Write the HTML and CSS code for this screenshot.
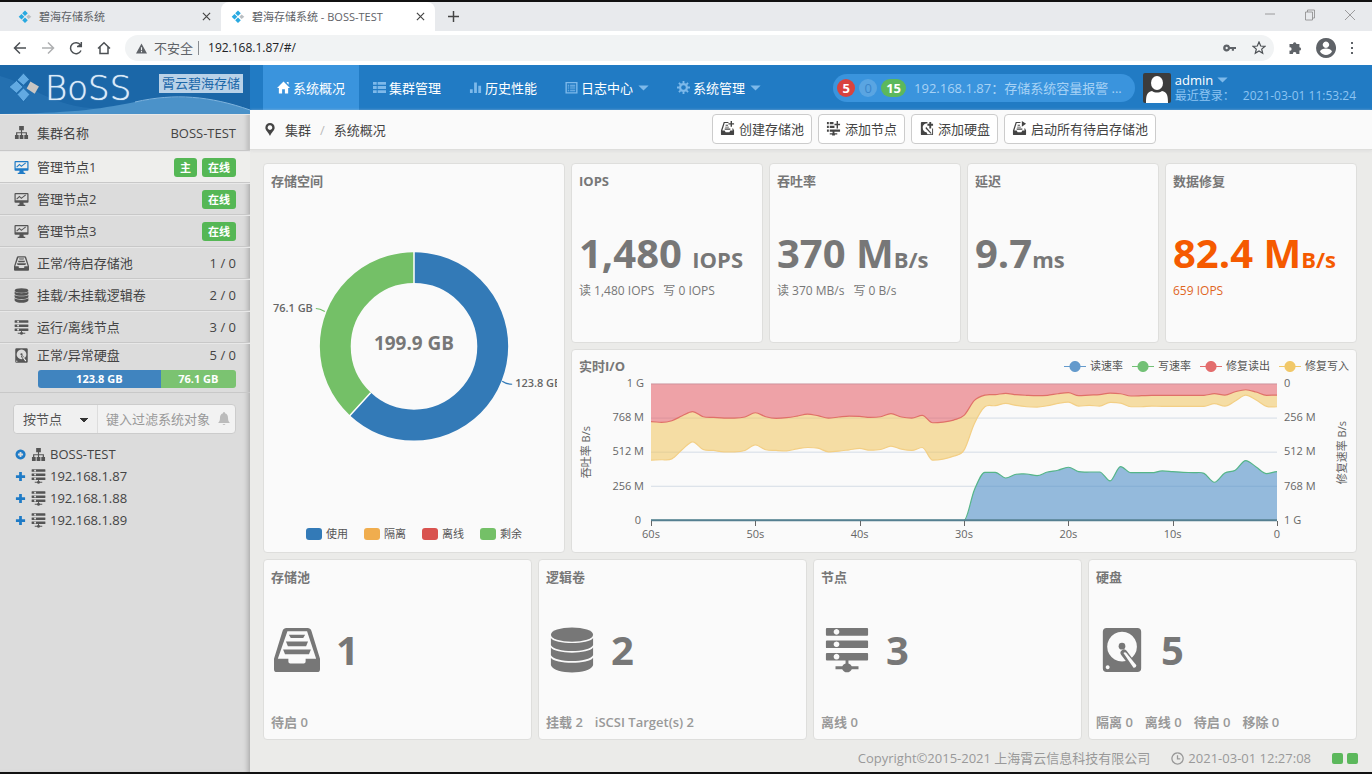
FILE: index.html
```html
<!DOCTYPE html>
<html lang="zh-CN">
<head>
<meta charset="utf-8">
<title>碧海存储系统 - BOSS-TEST</title>
<link rel="stylesheet" href="styles.css">
</head>
<body>
<svg class="sprite" aria-hidden="true">
  <symbol id="i-fav" viewBox="0 0 14 14"><path fill="#29a9e0" d="M7 .5 9.800 3.300 7 6.100 4.200 3.300zM3.500 4 6.300 6.800 3.500 9.600.7 6.800zM7 7.500 9.800 10.300 7 13.100 4.200 10.300z"/><path fill="#b9bec2" d="m10.600 4.500 2.700 2.300-2.700 2.300-2.300-2.300z"/></symbol>
  <symbol id="i-tray" viewBox="0 0 48 48"><path fill-rule="evenodd" d="M13 1h22q3 0 4 3l9 29v11q0 3-3 3H3q-3 0-3-3V33L9 4q1-3 4-3zm1 3.500L4 33h11v3q0 2 2 2h14q2 0 2-2v-3h11L34.500 4.500z"/><path d="M15.500 8h17l-2 3.500h-13zM12.500 15h23l-2 5h-19zM9.500 23.500h29l-2 5h-25z"/></symbol>
  <symbol id="i-db" viewBox="0 0 48 48"><ellipse cx="24" cy="8" rx="22" ry="7.500"/><path d="M2 11.500c4 7 40 7 44 0V19c-4 8-40 8-44 0zM2 21.500c4 7 40 7 44 0v8c-4 8-40 8-44 0zM2 32c4 7 40 7 44 0v8c-4 10-40 10-44 0z"/></symbol>
  <symbol id="i-server" viewBox="0 0 48 48"><path fill-rule="evenodd" d="M3 1h42q1 0 1 1v6q0 1-1 1H3q-1 0-1-1V2q0-1 1-1zm10 1a3 3 0 1 0 .1 0zM3 14h42q1 0 1 1v6q0 1-1 1H3q-1 0-1-1v-6q0-1 1-1zm10 1a3 3 0 1 0 .1 0zM3 27h42q1 0 1 1v6q0 1-1 1H25.500v3h0A5.500 5.500 0 0 1 29 41h7v3h-7a5.500 5.500 0 0 1-10 0h-7v-3h7a5.500 5.500 0 0 1 3.500-3v-3H3q-1 0-1-1v-6q0-1 1-1zm10 1a3 3 0 1 0 .1 0z"/></symbol>
  <symbol id="i-disk" viewBox="0 0 48 48"><path fill-rule="evenodd" d="M8 1h32q4 0 4 4v38q0 4-4 4H8q-4 0-4-4V5q0-4 4-4zm16 4a15.500 15.500 0 1 0 .1 0zM9 40a2 2 0 1 0 .1 0z"/><circle cx="24" cy="20" r="3.500"/><path d="m26 27 10.500 14" fill="none" stroke="currentColor" stroke-width="7" stroke-linecap="round"/><path d="M25.500 27q1.500-1.500 3 0L39 40q0 3-3 2.500z" fill="#fafafa"/></symbol>
  <symbol id="i-map" viewBox="0 0 16 16"><path d="M5.500 1h5v4.500H8.600V7.600h5.200v3H15V15h-4v-4.400h1.500V8.900H8.600v1.700H10V15H6v-4.400h1.400V8.900H3.500v1.700H5V15H1v-4.400h1.200v-3h5.200V5.500H5.500z"/></symbol>
  <symbol id="i-monitor" viewBox="0 0 16 16"><path fill-rule="evenodd" d="M1.500 1h13q1 0 1 1v8.500q0 1-1 1H10l.5 2H12V15H4v-1.500h1.500l.5-2H1.500q-1 0-1-1V2q0-1 1-1zm.3 1.300v6.500h12.400V2.300z"/><path fill="none" stroke="currentColor" stroke-width="1.100" d="m2.800 7.500 3-2.700 2 2L12.500 3"/></symbol>
  <symbol id="i-caret" viewBox="0 0 12 7"><path d="M0 .5h12l-6 6z"/></symbol>
  <symbol id="i-plus" viewBox="0 0 12 12"><path d="M4.500 1h3v3.500H11v3H7.500V11h-3V7.500H1v-3h3.500z"/></symbol>
</svg>

<header class="browser">
  <div class="tabs">
    <div class="tab"><svg class="fav"><use href="#i-fav"/></svg><span>碧海存储系统</span><button class="bare" aria-label="关闭标签"><svg class="x" viewBox="0 0 10 10"><path d="m1 1 8 8M9 1 1 9"/></svg></button></div>
    <div class="tab tab-on"><svg class="fav"><use href="#i-fav"/></svg><span>碧海存储系统 - BOSS-TEST</span><button class="bare" aria-label="关闭标签"><svg class="x" viewBox="0 0 10 10"><path d="m1 1 8 8M9 1 1 9"/></svg></button></div>
    <button class="bare newtab" aria-label="新标签"><svg class="x big-x" viewBox="0 0 12 12"><path d="M6 0v12M0 6h12"/></svg></button>
    <div class="winctl">
      <button class="bare" aria-label="最小化"><svg viewBox="0 0 12 12"><path d="M1 5h10"/></svg></button>
      <button class="bare" aria-label="还原"><svg viewBox="0 0 12 12"><path d="M1.500 3h7v8h-7zM3.500 3V1h7v8h-2"/></svg></button>
      <button class="bare" aria-label="关闭"><svg viewBox="0 0 12 12"><path d="m1 1 10 10M11 1 1 11"/></svg></button>
    </div>
  </div>
  <div class="toolbar">
    <button class="bare" aria-label="后退"><svg class="nav-ic" viewBox="0 0 14 14"><path d="M13 7H2M7 1.500 1.500 7 7 12.500"/></svg></button>
    <button class="bare dim" aria-label="前进"><svg class="nav-ic" viewBox="0 0 14 14"><path d="M1 7h11M7 1.500 12.500 7 7 12.500"/></svg></button>
    <button class="bare" aria-label="刷新"><svg class="nav-ic" viewBox="0 0 14 14"><path d="M12 9.500A5.500 5.500 0 1 1 11.500 4L9 5.500M12.300 1v4.500H8"/></svg></button>
    <button class="bare" aria-label="主页"><svg class="nav-ic" viewBox="0 0 14 14"><path d="M1 7.500 7 1.700l6 5.800M3 6v6.500h8V6"/></svg></button>
    <div class="address">
      <svg class="warn" viewBox="0 0 12 12"><path fill-rule="evenodd" d="M6 .5 12 11.500H0zM5.400 4.500v3.300h1.200V4.500zm0 4.300V10h1.200V8.800z"/></svg>
      <label for="url">不安全</label><span class="bar"></span>
      <input id="url" value="192.168.1.87/#/">
      <svg class="key" viewBox="0 0 14 10"><path fill-rule="evenodd" d="M4 1.200a3.800 3.800 0 1 0 3.600 5H9.500V8h2.300V6.200H14V3.800H7.600A3.800 3.800 0 0 0 4 1.200zm0 2.500a1.300 1.300 0 1 1-.1 0z"/></svg>
      <svg class="star" viewBox="0 0 14 14"><path d="m7 1 1.700 4 4.300.3-3.300 2.800 1 4.200L7 10l-3.700 2.300 1-4.200L1 5.300 5.300 5z"/></svg>
    </div>
    <svg class="ext" viewBox="0 0 14 14"><path d="M5 3a1.700 1.700 0 1 1 3.400 0h3v3.200a1.700 1.700 0 1 1 0 3.400V13H8.300a1.700 1.700 0 1 0-3.300 0H1.500V9.600a1.700 1.700 0 1 0 0-3.300V3z"/></svg>
    <svg class="person" viewBox="0 0 20 20"><path fill-rule="evenodd" d="M10 0a10 10 0 1 0 .1 0zm0 3.500a3.200 3.200 0 1 1-.1 0zM4 13.500c1-4 11-4 12 0a7 7 0 0 1-12 0z"/></svg>
    <svg class="dots" viewBox="0 0 4 14"><path d="M1 1h2v2H1zM1 6h2v2H1zM1 11h2v2H1z"/></svg>
  </div>
</header>

<div class="app">
  <aside class="side">
    <div class="brand">
      <svg class="wave" viewBox="0 0 250 49" preserveAspectRatio="none"><path fill="#3d86c3" opacity=".3" d="M0 11C30 19 50 40 90 43s80-15 160 2v4H0z"/><path fill="#4b92c9" d="M0 49C70 48 95 45 135 37s75-6 115 8v4z"/><path fill="none" stroke="#7fb4de" d="M135 37c40-9 75-6 115 8"/></svg>
      <svg class="mark" viewBox="0 0 30 30"><g fill="#62aae2" stroke="#1b67a8" stroke-width=".8"><path d="M14.500 1 20 7l-5.500 5.500L8.500 7.500z"/><path d="m8 8 6 6-6 6-7-6z"/><path d="m14.500 15 6 6-6 7-6-7z"/></g><path fill="#c9c6c3" d="m21 9 8 4.500-4 7-7.500-5z"/></svg>
      <span class="word">BoSS</span>
      <span class="sub">霄云碧海存储</span>
    </div>
    <ul class="rows">
      <li class="first"><svg class="ic"><use href="#i-map"/></svg><span>集群名称</span><b>BOSS-TEST</b></li>
      <li class="on"><svg class="ic blue"><use href="#i-monitor"/></svg><span>管理节点1</span><em class="tag">主</em><em class="tag">在线</em></li>
      <li><svg class="ic"><use href="#i-monitor"/></svg><span>管理节点2</span><em class="tag">在线</em></li>
      <li><svg class="ic"><use href="#i-monitor"/></svg><span>管理节点3</span><em class="tag">在线</em></li>
      <li><svg class="ic"><use href="#i-tray"/></svg><span>正常/待启存储池</span><b>1 / 0</b></li>
      <li><svg class="ic"><use href="#i-db"/></svg><span>挂载/未挂载逻辑卷</span><b>2 / 0</b></li>
      <li><svg class="ic"><use href="#i-server"/></svg><span>运行/离线节点</span><b>3 / 0</b></li>
      <li class="last"><svg class="ic"><use href="#i-disk"/></svg><span>正常/异常硬盘</span><b>5 / 0</b>
        <div class="meter"><i class="used" style="width:62%">123.8 GB</i><i class="free" style="width:38%">76.1 GB</i></div></li>
    </ul>
    <div class="filter">
      <select aria-label="分组方式"><option>按节点</option></select>
      <input placeholder="键入过滤系统对象" aria-label="键入过滤系统对象">
      <svg viewBox="0 0 12 14"><path d="M6 0q1 0 1 1.200C9.500 2 10 4 10 6c0 3 1 4 2 5H0c1-1 2-2 2-5 0-2 .5-4 3-4.800Q5 0 6 0zM4.500 12h3q-1.500 2-3 0z"/></svg>
    </div>
    <ul class="tree">
      <li><svg class="pm" viewBox="0 0 12 12"><path fill-rule="evenodd" d="M6 .5a5.500 5.500 0 1 0 .1 0zM5 3.200h2V5h1.800v2H7v1.800H5V7H3.200V5H5z"/></svg><svg class="ic"><use href="#i-map"/></svg>BOSS-TEST</li>
      <li><svg class="pm"><use href="#i-plus"/></svg><svg class="ic"><use href="#i-server"/></svg>192.168.1.87</li>
      <li><svg class="pm"><use href="#i-plus"/></svg><svg class="ic"><use href="#i-server"/></svg>192.168.1.88</li>
      <li><svg class="pm"><use href="#i-plus"/></svg><svg class="ic"><use href="#i-server"/></svg>192.168.1.89</li>
    </ul>
  </aside>

  <main class="main">
    <nav class="top">
      <a class="on" href="#"><svg viewBox="0 0 14 14"><path d="M7 .5 14 7.500h-2V13.500H8.500V9h-3v4.500H2v-6H0zM10.500 1h2v3l-2-2z"/></svg>系统概况</a>
      <a href="#"><svg viewBox="0 0 14 14"><path d="M0 1h4v3H0zM5 1h9v3H5zM0 5.500h4v3H0zM5 5.500h9v3H5zM0 10h4v3H0zM5 10h9v3H5z"/></svg>集群管理</a>
      <a href="#"><svg viewBox="0 0 14 14"><path d="M1 9h3v4H1zM5.500 1.500h3V13h-3zM10 5h3v8h-3z"/></svg>历史性能</a>
      <a href="#"><svg viewBox="0 0 14 14"><path fill-rule="evenodd" d="M.5 1h13v12.500H.5zM2 2.500V12h10V2.500zM3 4h1.500v1H3zm2.500 0H11v1H5.500zM3 6h1.500v1H3zm2.500 0H11v1H5.500zM3 8h1.500v1H3zm2.500 0H11v1H5.500zM3 10h1.500v1H3zm2.500 0H11v1H5.500z"/></svg>日志中心<svg class="caret"><use href="#i-caret"/></svg></a>
      <a href="#"><svg viewBox="0 0 14 14"><circle cx="7" cy="7" r="3.700" fill="none" stroke="currentColor" stroke-width="2.400"/><path d="M6 0h2v2.500H6zM6 11.500h2V14H6zM0 6h2.500v2H0zM11.500 6H14v2h-2.500zM1.400 2.800l1.400-1.400 1.800 1.800-1.400 1.400zM9.400 10.800l1.400-1.400 1.800 1.800-1.400 1.400zM1.400 11.200l1.800-1.800 1.400 1.400-1.800 1.800zM9.400 3.200l1.800-1.800 1.400 1.400-1.800 1.800z"/></svg>系统管理<svg class="caret"><use href="#i-caret"/></svg></a>
      <div class="alert"><i class="red">5</i><i class="zero">0</i><i class="green">15</i><span>192.168.1.87：存储系统容量报警 ...</span></div>
      <div class="user">
        <svg class="avatar" viewBox="0 0 28 30"><rect width="28" height="30" rx="2" fill="#3c3c3c"/><ellipse cx="14" cy="10" rx="6" ry="7" fill="#fff"/><path fill="#fff" d="M3 30c0-8 1-11 6-12 3 2 7 2 10 0 5 1 6 4 6 12z"/></svg>
        <div><button class="bare name">admin<svg class="caret"><use href="#i-caret"/></svg></button><p><span>最近登录：</span><span>2021-03-01 11:53:24</span></p></div>
      </div>
    </nav>
    <div class="crumbs">
      <svg class="pin" viewBox="0 0 10 14"><path fill-rule="evenodd" d="M5 0a5 5 0 0 0-5 5c0 3 3 4 5 9 2-5 5-6 5-9a5 5 0 0 0-5-5zm0 2.500a2.500 2.500 0 1 1-.1 0z"/></svg>
      <a href="#">集群</a><i>/</i><span>系统概况</span>
      <div class="actions">
        <button><svg class="add" viewBox="0 0 16 16"><path fill-rule="evenodd" d="M4 1h5v1.200H5L2.500 10H5l1 2h4l1-2h2.500L13 8h1l1 2v4q0 1-1 1H2q-1 0-1-1v-4zM6 4h2.500v1H6zM5.500 6h4v1h-4zM5 8h6v1.200H5zM11.300 0h1.500v2.300H15v1.500h-2.200V6h-1.500V3.800H9V2.300h2.300z"/></svg>创建存储池</button>
        <button><svg class="add" viewBox="0 0 16 16"><path d="M1 1h2v2.500H1zM4 1h4v2.500H4zM1 5h2v2.500H1zM4 5h5v2.500H4zM1 9h2v2.500H1zM4 9h11v2.500H9V13h3v1.500H9.500v1h-3v-1H4V13h3v-1.500H4zM11.300 0h1.500v3H15v1.500h-2.200V8h-1.500V4.500H9V3h2.300z"/></svg>添加节点</button>
        <button><svg class="add" viewBox="0 0 16 16"><path fill-rule="evenodd" d="M3 1h6v1.500C5 3 4 5 4 7.500S6 12 8 12l1 2h5V8h1v6q0 1-1 1H3q-1 0-1-1V2q0-1 1-1zM7.500 6l6 7-1 .7L7 8zM11 1h2v2h2v2h-2v3h-2V5H9V3h2z"/></svg>添加硬盘</button>
        <button><svg class="add" viewBox="0 0 16 16"><path fill-rule="evenodd" d="M4 1h5v1.200H5L2.500 10H5l1 2h4l1-2h2.500L13 8h1l1 2v4q0 1-1 1H2q-1 0-1-1v-4zM6 4h2.500v1H6zM5.500 6h4v1h-4zM5 8h6v1.200H5zM10.500 0 15 3l-4.500 3z"/></svg>启动所有待启存储池</button>
      </div>
    </div>

    <div class="board">
      <section class="card space">
        <h2>存储空间</h2>
        <svg class="donut" viewBox="0 -5 287 320">
          <g fill="none" stroke-width="31"><circle class="s-used" cx="143.500" cy="144" r="79" pathLength="1000" stroke-dasharray="619 1000" transform="rotate(-90 143.500 144)"/><circle class="s-free" cx="143.500" cy="144" r="79" pathLength="1000" stroke-dasharray="0 619 381 1000" transform="rotate(-90 143.500 144)"/></g>
          <path stroke="#fff" stroke-width="1.500" d="M143.500 81V49M100 190.500 78.500 214"/>
          <path fill="none" stroke="#6fbe66" stroke-width="1.200" d="M45 106q4 0 9 3"/><path fill="none" stroke="#337ab7" stroke-width="1.200" d="M232 179q4 3 10 3"/>
          <text class="total" x="143.500" y="148" text-anchor="middle">199.9 GB</text>
          <text class="lab" x="42" y="110" text-anchor="end">76.1 GB</text><text class="lab" x="245" y="185">123.8 GB</text>
        </svg>
        <ul class="legend"><li><i class="c-used"></i>使用</li><li><i class="c-iso"></i>隔离</li><li><i class="c-off"></i>离线</li><li><i class="c-free"></i>剩余</li></ul>
      </section>

      <section class="card stat"><h2>IOPS</h2><p class="num">1,480 <small>IOPS</small></p><p class="det"><span>读 1,480 IOPS</span><span>写 0 IOPS</span></p></section>
      <section class="card stat"><h2>吞吐率</h2><p class="num">370 M<small>B/s</small></p><p class="det"><span>读 370 MB/s</span><span>写 0 B/s</span></p></section>
      <section class="card stat"><h2>延迟</h2><p class="num">9.7<small>ms</small></p></section>
      <section class="card stat hot"><h2>数据修复</h2><p class="num">82.4 M<small>B/s</small></p><p class="det">659 IOPS</p></section>

      <section class="card io">
        <div class="io-head"><h2>实时I/O</h2>
          <ul class="series"><li class="k-read"><i></i>读速率</li><li class="k-write"><i></i>写速率</li><li class="k-rr"><i></i>修复读出</li><li class="k-rw"><i></i>修复写入</li></ul></div>
        <div class="chart">
          <span class="axis">吞吐率 B/s</span>
          <div class="ys left"><span>1 G</span><span>768 M</span><span>512 M</span><span>256 M</span><span>0&nbsp;</span></div>
          <svg id="plot" class="plot" viewBox="0 0 600 1024" preserveAspectRatio="none">
            <path class="grid" d="M0 0H600M0 256H600M0 512H600M0 768H600"/>
            <path id="area-rw" class="a-rw"/><path id="area-rr" class="a-rr"/><path id="area-read" class="a-read"/>
            <path id="line-rw" class="l-rw"/><path id="line-rr" class="l-rr"/><path id="line-write" class="l-write"/>
            <path class="base" d="M0 1024H600"/><path class="redtop" d="M0 0H600"/>
          </svg>
          <div class="ys"><span>0</span><span>256 M</span><span>512 M</span><span>768 M</span><span>1 G</span></div>
          <span class="axis">修复速率 B/s</span>
          <div class="xs"><span>60s</span><span>50s</span><span>40s</span><span>30s</span><span>20s</span><span>10s</span><span>0</span></div>
        </div>
      </section>

      <div class="counts">
        <section class="card count"><h2>存储池</h2><p class="big"><svg><use href="#i-tray"/></svg>1</p><p class="foot"><span>待启 0</span></p></section>
        <section class="card count"><h2>逻辑卷</h2><p class="big"><svg><use href="#i-db"/></svg>2</p><p class="foot"><span>挂载 2</span><span>iSCSI Target(s) 2</span></p></section>
        <section class="card count"><h2>节点</h2><p class="big"><svg><use href="#i-server"/></svg>3</p><p class="foot"><span>离线 0</span></p></section>
        <section class="card count"><h2>硬盘</h2><p class="big"><svg><use href="#i-disk"/></svg>5</p><p class="foot"><span>隔离 0</span><span>离线 0</span><span>待启 0</span><span>移除 0</span></p></section>
      </div>
    </div>

    <footer class="status">
      <span>Copyright©2015-2021 上海霄云信息科技有限公司</span>
      <span class="clock"><svg viewBox="0 0 14 14"><path d="M7 1a6 6 0 1 0 .1 0M7 3.500V7.500H10"/></svg>2021-03-01 12:27:08</span>
      <span class="leds"><i></i><i></i></span>
    </footer>
  </main>
</div>
<script src="chart.js"></script>
</body>
</html>
```
FILE: styles.css
```css
*{box-sizing:border-box}
body{margin:0;min-height:100vh;display:flex;flex-direction:column;font:13px/20px "Open Sans","Noto Sans CJK SC",sans-serif;color:#555;background:#ebebe9;border-top:2px solid #111;border-bottom:2px solid #111}
h2,p,ul{margin:0;padding:0}
ul{list-style:none}
i,em{font-style:normal}
a{color:inherit;text-decoration:none}
svg{flex:none;fill:currentColor}
button,input,select{font:inherit;color:inherit}
.sprite{position:absolute;width:0;height:0}
.bare{border:0;background:none;padding:0;display:flex;align-items:center}

/* browser frame */
.browser{color:#5f6368}
.tabs{display:flex;height:29px;background:#e8eaed;font-size:11px}
.tab{display:flex;align-items:center;width:214px;padding:0 10px;gap:7px}
.tab:first-child{width:221px;padding-left:18px}
.tab-on{background:#fff;border-radius:8px 8px 0 0}
.tab span{flex:1;white-space:nowrap}
.fav{width:14px;height:14px}
.x{width:9px;height:9px;stroke:#444;stroke-width:1.3}
.big-x{width:11px;height:11px;stroke-width:1.6}
.newtab{margin-left:13px}
.winctl{display:flex;gap:28px;margin-left:auto;padding:0 16px 4px 0}
.winctl svg{width:12px;height:12px;fill:none;stroke:#888;stroke-width:.8}
.toolbar{display:flex;align-items:center;height:34px;gap:14px;padding:0 18px 0 13px;background:#fff}
.nav-ic{width:14px;height:14px;fill:none;stroke:#4c5054;stroke-width:1.5}
.dim{opacity:.45}
.address{flex:1;display:flex;align-items:center;height:26px;border-radius:13px;background:#f1f3f4;padding:0 8px 0 11px;font-size:12px}
.address label{margin-left:7px;font-size:13px}
.bar{width:1px;height:14px;background:#8a8d91;margin:0 9px 0 5px}
.address input{flex:1;border:0;background:none;padding:0;color:#202124;outline:0}
.warn{width:11px;height:11px}
.key{width:13px;height:10px;margin-right:16px}
.star{width:14px;height:14px;fill:none;stroke:#4c5054;stroke-width:1.2}
.ext{width:14px;height:14px}
.person{width:20px;height:20px}
.dots{width:4px;height:14px}

/* shell */
.app{flex:1;display:grid;grid-template-columns:250px minmax(0,1fr)}
.side{background:#dcdcdc;box-shadow:inset -5px 0 5px -3px #aaa;display:flex;flex-direction:column}
.brand{position:relative;display:flex;align-items:center;height:49px;background:#1b67a8;padding:0 7px 3px 8px}
.wave{position:absolute;inset:0;width:100%;height:100%}
.mark{width:32px;height:32px;position:relative}
.word{position:relative;margin-left:5px;font:200 34px/34px "DejaVu Sans",sans-serif;color:#dcebf8;text-shadow:0 0 1px #dcebf8}
.sub{position:relative;margin:0 0 10px auto;padding:0 3px;background:#b9d2e8;color:#1b67a8;line-height:19px}

.rows li{display:flex;flex-wrap:wrap;align-items:center;min-height:32px;padding:0 14px;border-bottom:1px solid #c8c8c8;border-top:1px solid #e8e8e8;color:#444}
.rows .first{min-height:37px}
.rows .on{background:#eeeeec}
.rows .last{padding-bottom:3px;min-height:50px}
.rows span{flex:1;margin-left:8px}
.rows b{font-weight:400}
.ic{width:15px;height:15px;color:#555}
.ic.blue{color:#1f7bc6}
.tag{margin-left:5px;padding:0 6px;border-radius:3px;background:#55b755;color:#fff;font-size:11px;font-weight:600;line-height:19px}
.meter{display:flex;width:100%;margin-top:2px;padding-left:24px;font-size:11px;font-weight:700;color:#fff;text-align:center;line-height:18px}
.used{background:#4084bf;border-radius:3px 0 0 3px}
.free{background:#7bc371;border-radius:0 3px 3px 0}
.filter{display:flex;align-items:center;height:30px;margin:11px 14px 9px 13px;border:1px solid #ccc;border-radius:4px;background:#f2f2f2}
.filter select{width:84px;height:28px;border:0;border-right:1px solid #ddd;border-radius:4px 0 0 4px;padding:0 9px;appearance:none;background:conic-gradient(from 315deg at 50% 100%,#333 90deg,transparent 0) 66px 13px/8px 4px no-repeat,#f0f0f0}
.filter input{flex:1;min-width:0;border:0;background:none;padding:0 0 0 8px;outline:0}
.filter input::placeholder{color:#999;opacity:1}
.filter>svg{width:12px;height:14px;margin-right:5px;color:#bbb}
.tree li{display:flex;align-items:center;line-height:21px;padding-left:15px;color:#444;min-height:22px}
.tree .ic{margin:0 4px 0 5px}
.pm{width:11px;height:11px;color:#1f7bc6}

.main{display:flex;flex-direction:column}
.top{display:flex;align-items:center;min-height:45px;background:#217bc4;padding:0 16px 0 13px;color:#fff}
.top a{display:flex;align-items:center;align-self:stretch;padding:0 14px;gap:3px;white-space:nowrap}
.top a.on{background:#3a94dd}
.top a svg{width:13px;height:13px;color:#7db9ea}
.top a.on svg{color:#fff}
.top svg.caret,.top a svg.caret{width:11px;height:6px;margin-left:2px;color:#7db9ea}
.alert{display:flex;align-items:center;height:28px;border-radius:14px;background:#3a94dd;margin-left:auto;padding:0 13px 0 4px;gap:4px;color:#a7d2f5;font-size:13px;white-space:nowrap}
.alert i{min-width:18px;border-radius:9px;text-align:center;font-weight:700;line-height:18px;color:#fff}
.alert span{margin-left:4px}
.red{background:#d9433f}.zero{background:#5aa5e2}.green{background:#5cb85c;padding:0 5px}
.alert .zero{color:#3a86cb;font-weight:400}
.user{display:flex;align-items:center;gap:4px;margin-left:8px;font-size:12px;white-space:nowrap}
.avatar{width:28px;height:30px}
.name{font-size:13px;line-height:16px;gap:2px}
.user p{display:flex;gap:8px;color:#8cc4f2;line-height:16px}

.crumbs{display:flex;align-items:center;min-height:40px;background:#fafafa;padding:0 16px 0 15px;border-bottom:1px solid #dededc;box-shadow:0 1px 3px #ddd;color:#444}
.pin{width:10px;height:13px;margin-right:10px}
.crumbs i{margin:0 9px;color:#bbb}
.actions{display:flex;gap:6px;margin:0 200px 2px auto}
.actions button{display:flex;align-items:center;gap:4px;height:30px;padding:0 7px;border:1px solid #ccc;border-radius:4px;background:#fff;color:#444;white-space:nowrap}
.add{width:15px;height:15px}

.board{flex:1;display:grid;grid-template-columns:302fr repeat(4,192fr);grid-template-rows:minmax(180px,180fr) minmax(203px,203fr) minmax(181px,181fr);gap:6px;padding:13px 15px 0 13px}
.card{display:flex;flex-direction:column;min-width:0;min-height:0;padding:7px;border:1px solid #dededc;border-radius:4px;background:#fafafa}
.card h2{font-size:13px;line-height:20px;font-weight:700;color:#777}
.space{grid-row:1/3}
.donut{flex:1 1 280px;width:100%;min-height:0}
.s-used{stroke:#337ab7}.s-free{stroke:#74c067}
.total{font-size:19px;font-weight:700;fill:#777}
.lab{font-size:11px;font-weight:600;fill:#666}
.legend{display:flex;justify-content:center;gap:16px;font-size:11px;color:#555;padding:0 0 1px}
.legend li,.series li{display:flex;align-items:center;gap:4px}
.legend i{width:16px;height:12px;border-radius:3px}
.c-used{background:#337ab7}.c-iso{background:#f0ad4e}.c-off{background:#d9534f}.c-free{background:#74c067}

.num{margin-top:39px;font-size:40px;line-height:46px;font-weight:700;color:#777;white-space:nowrap}
.num small{font-size:22px}
.det,.foot{display:flex;gap:9px}
.det{font-size:12px;line-height:18px;color:#777;white-space:nowrap}
.hot .num{color:#f55a00}.hot .det{color:#e0661f}

.io{grid-column:2/-1;padding-bottom:0}
.io-head{display:flex;justify-content:space-between;align-items:center;line-height:18px}
.io-head h2{line-height:18px}
.series{display:flex;gap:9px;font-size:11px;color:#555}
.series i{width:22px;height:11px;background:radial-gradient(circle,currentColor 5px,transparent 6px),linear-gradient(currentColor,currentColor) 0 5px/100% 1px no-repeat;opacity:.85}
.k-read i{color:#4b8ac4}.k-write i{color:#5cb860}.k-rr i{color:#e05555}.k-rw i{color:#f0c050}
.chart{flex:1;display:grid;grid-template-columns:14px 44px minmax(0,1fr) 44px 14px;grid-template-rows:minmax(0,1fr) 31px;column-gap:7px;font-size:11px;color:#666;padding-top:9px;min-height:0}
.axis{writing-mode:vertical-rl;text-orientation:sideways;transform:rotate(180deg);align-self:center;justify-self:center;line-height:14px}
.ys{display:flex;flex-direction:column;justify-content:space-between;line-height:14px;margin:-8px 0 -6px}
.left{text-align:right}
.plot{width:100%;height:0;min-height:100%;overflow:visible;fill:none}
.plot path{vector-effect:non-scaling-stroke}
.grid{stroke:#d5dce6}.base{stroke:#557f90;stroke-width:2}.redtop{stroke:#d99aa0}
.a-read{fill:#5090c8;fill-opacity:.6}.a-rr{fill:#e35a62;fill-opacity:.55}.a-rw{fill:#f0c55c;fill-opacity:.55}
.l-write{stroke:#55b588;stroke-width:1.2}.l-rr{stroke:#e07068;stroke-width:1.2}.l-rw{stroke:#f3cf85;stroke-width:1.2}
.xs{grid-column:3;display:flex;justify-content:space-between;margin:0 -20px;line-height:14px}
.xs span{position:relative;width:40px;text-align:center;padding-top:6px}
.xs span::before{content:"";position:absolute;left:20px;top:0;height:5px;border-left:1px solid #666}

.counts{grid-column:1/-1;display:grid;grid-template-columns:repeat(4,minmax(0,1fr));gap:6px}
.count{justify-content:space-between}
.big{display:flex;align-items:center;gap:16px;padding:2px 0 0 3px;font-size:40px;line-height:52px;font-weight:700;color:#777}
.big svg{width:46px;height:46px}
.foot{gap:12px;font-weight:600;color:#999}
.status{display:flex;justify-content:flex-end;align-items:center;gap:21px;min-height:32px;padding:4px 14px 0;color:#999}
.clock{display:flex;align-items:center;gap:4px}
.clock svg{width:13px;height:13px;fill:none;stroke:currentColor;stroke-width:1.4}
.leds{display:flex;gap:4px}
.leds i{width:11px;height:11px;border-radius:2px;background:#5cb85c}
```
FILE: chart.js
```js
// Throughput samples, one per second, in MB/s. The first sample is 60s ago.
var repairRead = [283,288,276,238,208,246,251,256,256,248,216,246,258,253,241,226,238,256,248,241,243,251,246,223,248,256,236,291,286,271,236,123,83,80,70,80,85,88,85,73,65,88,83,80,68,73,90,88,85,85,85,85,85,85,73,83,58,43,60,85,83];
var repairWrite = [572,569,562,492,434,492,499,509,509,499,457,494,499,502,487,477,482,509,504,494,484,497,492,467,489,499,477,572,564,542,497,296,171,163,146,161,171,173,163,146,136,166,161,166,138,143,171,171,166,168,168,168,168,168,148,166,128,83,120,168,171];
var read = [0,230,361,361,318,346,348,336,363,376,399,366,363,363,296,404,358,358,358,371,366,361,358,353,286,356,376,449,401,351,366];

function tangent(p, i) {
  if (i === 0 || i === p.length - 1) return 0;
  var a = p[i][1] - p[i - 1][1], b = p[i + 1][1] - p[i][1];
  return a * b <= 0 ? 0 : (a + b) / 2;
}
function smooth(p) {
  var d = 'M' + p[0].join(' ');
  for (var i = 1; i < p.length; i++) {
    var w = (p[i][0] - p[i - 1][0]) / 3;
    d += 'C' + [p[i - 1][0] + w, p[i - 1][1] + tangent(p, i - 1) / 3, p[i][0] - w, p[i][1] - tangent(p, i) / 3, p[i][0], p[i][1]].join(' ');
  }
  return d;
}
function points(values, start, fromBottom) {
  return values.map(function (v, i) { return [(start + i) * 10, fromBottom ? 1024 - v : v]; });
}
function set(id, d) { document.getElementById(id).setAttribute('d', d); }

var rr = points(repairRead, 0, false), rw = points(repairWrite, 0, false), rd = points(read, 30, true);
set('line-rr', smooth(rr));
set('area-rr', smooth(rr) + 'L600 0L0 0Z');
set('line-rw', smooth(rw));
set('area-rw', smooth(rw) + 'L' + smooth(rr.slice().reverse()).slice(1) + 'Z');
set('line-write', 'M0 1024H300' + smooth(rd).replace('M', 'L'));
set('area-read', smooth(rd) + 'L600 1024L300 1024Z');
```
